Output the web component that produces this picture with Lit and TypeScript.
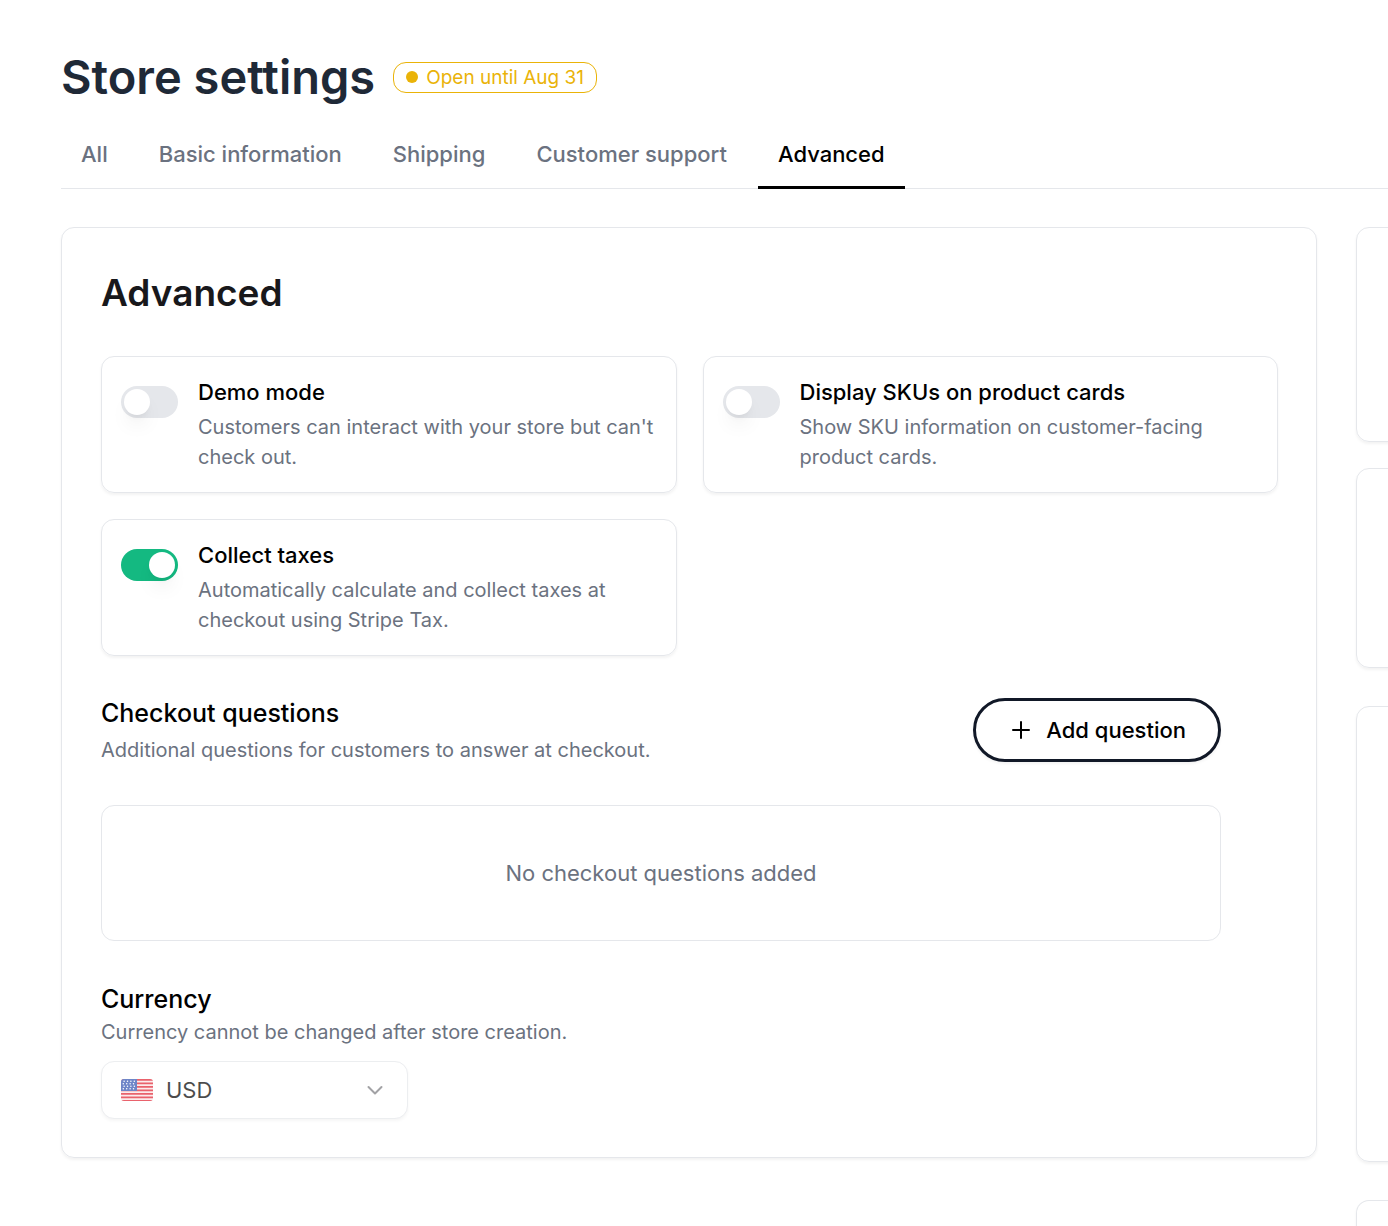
import { LitElement, html, css, svg } from "lit";
import { customElement, property, state } from "lit/decorators.js";
import { classMap } from "lit/directives/class-map.js";

interface Setting {
  id: string;
  title: string;
  description: string;
  enabled: boolean;
}

const TABS = ["All", "Basic information", "Shipping", "Customer support", "Advanced"];

@customElement("setting-card")
export class SettingCard extends LitElement {
  @property({ type: Object }) setting!: Setting;

  static styles = css`
    :host {
      display: block;
    }
    .card {
      display: flex;
      align-items: flex-start;
      gap: 20px;
      height: 100%;
      box-sizing: border-box;
      padding: 19px 19px 20px;
      border: 1px solid #e5e7eb;
      border-radius: 13px;
      box-shadow: 0 2px 3px rgba(0, 0, 0, 0.05);
    }
    .switch {
      appearance: none;
      flex: none;
      display: flex;
      align-items: center;
      width: 57px;
      height: 32px;
      margin: 10px 0 0;
      padding: 0 3px;
      border-radius: 16px;
      background: #e5e7eb;
      cursor: pointer;
    }
    .switch::before {
      content: "";
      width: 26px;
      height: 26px;
      border-radius: 50%;
      background: #fff;
      box-shadow: 0 13px 20px -4px rgba(0, 0, 0, 0.08), 0 5px 8px -5px rgba(0, 0, 0, 0.1);
    }
    .switch:checked {
      justify-content: flex-end;
      background: #14b981;
    }
    .text {
      min-width: 0;
    }
    .title {
      display: block;
      margin-bottom: 4px;
      font-size: 22px;
      font-weight: 500;
      line-height: 32px;
      color: #000;
    }
    .description {
      margin: 0;
      font-size: 20px;
      line-height: 30px;
      color: #6b7280;
    }
  `;

  render() {
    const { id, title, description, enabled } = this.setting;
    return html`
      <div class="card">
        <input class="switch" type="checkbox" role="switch" id=${id} aria-describedby="${id}-text" .checked=${enabled} />
        <div class="text">
          <label class="title" for=${id}>${title}</label>
          <p class="description" id="${id}-text">${description}</p>
        </div>
      </div>
    `;
  }
}

@customElement("app-root")
export class AppRoot extends LitElement {
  @state() private activeTab = "Advanced";

  private settings: Setting[] = [
    { id: "demo", title: "Demo mode", description: "Customers can interact with your store but can't check out.", enabled: false },
    { id: "skus", title: "Display SKUs on product cards", description: "Show SKU information on customer-facing product cards.", enabled: false },
    { id: "taxes", title: "Collect taxes", description: "Automatically calculate and collect taxes at checkout using Stripe Tax.", enabled: true },
  ];

  static styles = css`
    :host {
      display: block;
      font-family: Inter, "Liberation Sans", sans-serif;
      color: #000;
      background: #fff;
    }
    .page {
      display: flex;
      flex-direction: column;
      box-sizing: border-box;
      min-height: 100vh;
      padding: 48px 0 0 61px;
      overflow: hidden;
    }
    .heading {
      display: flex;
      align-items: center;
      gap: 18px;
    }
    h1,
    h2,
    h3,
    p {
      margin: 0;
    }
    h1 {
      font-size: 47px;
      font-weight: 600;
      line-height: 58px;
      color: #1f2937;
    }
    .badge {
      display: flex;
      align-items: center;
      gap: 8px;
      padding: 0 12px;
      border: 1px solid #eab308;
      border-radius: 13px;
      font-size: 19px;
      line-height: 29px;
      color: #eab308;
    }
    .dot {
      width: 12px;
      height: 12px;
      border-radius: 50%;
      background: #eab308;
    }
    .tabs {
      display: flex;
      gap: 11px;
      margin-top: 14px;
      border-bottom: 1px solid #e5e7eb;
    }
    .tab {
      margin-bottom: -1px;
      padding: 18px 20px 16px;
      border-bottom: 3px solid transparent;
      font-size: 22px;
      font-weight: 500;
      line-height: 32px;
      color: #6b7280;
      text-decoration: none;
    }
    .tab.active {
      color: #000;
      border-color: #000;
    }
    .layout {
      flex: 1;
      display: grid;
      grid-template-columns: minmax(0, 1fr) 32px;
      gap: 39px;
      padding-top: 38px;
    }
    .panel {
      align-self: start;
      margin-bottom: 64px;
      padding: 39px 38px 38px 39px;
      border: 1px solid #e5e7eb;
      border-radius: 13px;
      box-shadow: 0 2px 3px rgba(0, 0, 0, 0.05);
    }
    h2 {
      font-size: 37px;
      font-weight: 600;
      line-height: 52px;
      color: #18181b;
    }
    .settings {
      display: grid;
      grid-template-columns: repeat(2, minmax(0, 1fr));
      gap: 26px;
      margin-top: 37px;
    }
    .section {
      margin: 39px 57px 0 0;
    }
    .section + .section {
      margin-top: 40px;
    }
    .section-head {
      display: flex;
      align-items: center;
      justify-content: space-between;
    }
    h3 {
      font-size: 25px;
      font-weight: 500;
      line-height: 36px;
    }
    .hint {
      font-size: 20px;
      line-height: 30px;
      color: #6b7280;
    }
    .section-head .hint {
      margin-top: 4px;
    }
    .add {
      display: flex;
      align-items: center;
      gap: 12px;
      padding: 13px 32px;
      border: 3px solid #111827;
      border-radius: 32px;
      background: #fff;
      box-shadow: 0 2px 3px rgba(0, 0, 0, 0.05);
      font: 500 22px/32px Inter, "Liberation Sans", sans-serif;
      color: #000;
      cursor: pointer;
    }
    .empty {
      margin-top: 40px;
      padding: 51px 20px;
      border: 1px solid #e5e7eb;
      border-radius: 13px;
      font-size: 22px;
      line-height: 32px;
      text-align: center;
      color: #6b7280;
    }
    .currency-label {
      display: block;
    }
    .select {
      display: grid;
      align-items: center;
      width: 307px;
      max-width: 100%;
      margin-top: 14px;
      opacity: 0.7;
    }
    .select > * {
      grid-area: 1 / 1;
    }
    .select select {
      appearance: none;
      width: 100%;
      height: 58px;
      padding: 0 64px;
      border: 1px solid #e5e7eb;
      border-radius: 13px;
      background: #fff;
      box-shadow: 0 2px 3px rgba(0, 0, 0, 0.05);
      font: 400 22px/32px Inter, "Liberation Sans", sans-serif;
      color: #000;
      opacity: 1;
    }
    .flag {
      z-index: 1;
      margin-left: 20px;
    }
    .chevron {
      z-index: 1;
      justify-self: end;
      margin-right: 20px;
    }
    .side {
      display: flex;
      flex-direction: column;
      gap: 38px;
    }
    .group {
      display: grid;
      gap: 26px;
    }
    .side-card {
      box-sizing: border-box;
      width: 420px;
      border: 1px solid #e5e7eb;
      border-radius: 13px;
      box-shadow: 0 2px 3px rgba(0, 0, 0, 0.05);
    }
    .small {
      min-height: 200px;
    }
    .medium {
      min-height: 215px;
    }
    .large {
      min-height: 456px;
    }
    .rest {
      flex: 1;
      border-bottom: 0;
      border-radius: 13px 13px 0 0;
    }
  `;

  private flag() {
    const stripes = [0, 1, 2, 3, 4, 5, 6].map(
      (i) => svg`<rect y=${i * 3.5} width="32" height="1.75" fill="#e0202f" />`
    );
    const stars = [0, 1, 2, 3].flatMap((row) =>
      [0, 1, 2, 3].map(
        (col) => svg`<circle cx=${2.8 + col * 3.4 + (row % 2 ? -0.5 : 0.3)} cy=${2.2 + row * 2.5} r="0.75" fill="#fff" />`
      )
    );
    return html`<svg class="flag" width="32" height="22" viewBox="0 0 32 22" aria-hidden="true">
      <defs><clipPath id="flag-shape"><rect width="32" height="22" rx="3" /></clipPath></defs>
      <g clip-path="url(#flag-shape)">
        <rect width="32" height="22" fill="#fbe3e5" />
        ${stripes}
        <rect width="16" height="12" fill="#3254b2" />
        ${stars}
      </g>
    </svg>`;
  }

  render() {
    return html`
      <div class="page">
        <header class="heading">
          <h1>Store settings</h1>
          <span class="badge"><span class="dot"></span>Open until Aug 31</span>
        </header>
        <nav class="tabs">
          ${TABS.map(
            (tab) => html`<a
              class=${classMap({ tab: true, active: tab === this.activeTab })}
              href="#${tab.toLowerCase().replace(" ", "-")}"
              @click=${() => (this.activeTab = tab)}
              >${tab}</a
            >`
          )}
        </nav>
        <div class="layout">
          <main class="panel">
            <h2>Advanced</h2>
            <div class="settings">
              ${this.settings.map((s) => html`<setting-card .setting=${s}></setting-card>`)}
            </div>
            <section class="section">
              <div class="section-head">
                <div>
                  <h3>Checkout questions</h3>
                  <p class="hint">Additional questions for customers to answer at checkout.</p>
                </div>
                <button class="add" type="button">
                  <svg width="26" height="26" viewBox="0 0 26 26" fill="none" stroke="currentColor" stroke-width="2" stroke-linecap="round" aria-hidden="true">
                    <path d="M13 5v16M5 13h16" />
                  </svg>
                  Add question
                </button>
              </div>
              <div class="empty">No checkout questions added</div>
            </section>
            <section class="section">
              <h3><label class="currency-label" for="currency">Currency</label></h3>
              <p class="hint">Currency cannot be changed after store creation.</p>
              <div class="select">
                <select id="currency" disabled>
                  <option>USD</option>
                </select>
                ${this.flag()}
                <svg class="chevron" width="26" height="26" viewBox="0 0 26 26" fill="none" stroke="#7c7c80" stroke-width="2" stroke-linecap="round" stroke-linejoin="round" aria-hidden="true">
                  <path d="M6.5 10l6.5 6.500L19.5 10" />
                </svg>
              </div>
            </section>
          </main>
          <aside class="side">
            <div class="group">
              <div class="side-card medium"></div>
              <div class="side-card small"></div>
            </div>
            <div class="side-card large"></div>
            <div class="side-card rest"></div>
          </aside>
        </div>
      </div>
    `;
  }
}
